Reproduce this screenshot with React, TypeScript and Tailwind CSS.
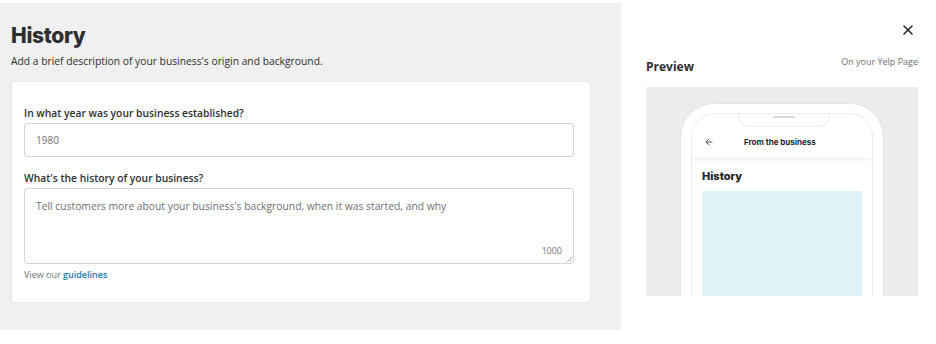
import React from 'react';
import { X, ArrowLeft } from 'lucide-react';

const sans = "font-['Open_Sans',sans-serif]";

const Phone: React.FC = () => (
  <div className="mx-auto mt-[16px] w-[204px] h-[260px] rounded-t-[34px] bg-white border border-[#e4e4e4] px-[10px] pt-[9px]">
    <div className="relative h-full rounded-t-[24px] border border-[#ececec] bg-white overflow-hidden">
      {/* notch */}
      <div className="absolute left-[46px] -top-px w-[92px] h-[14px] rounded-b-[12px] border border-t-0 border-[#ececec] bg-white flex justify-center pt-[3px]">
        <div className="w-[22px] h-[2px] rounded-full bg-[#d8d8d8]" />
      </div>
      <div className="mt-[12px] h-[32px] flex items-center px-[12px] shadow-[0_2px_3px_rgba(0,0,0,0.06)]">
        <ArrowLeft size={10} strokeWidth={2} className="text-[#333]" />
        <span className="ml-[30px] text-[8px] font-bold text-[#222] font-['Inter',sans-serif]">From the business</span>
      </div>
      <div className="px-[10px] pt-[13px]">
        <div className="text-[11px] font-extrabold text-[#222] font-['Inter',sans-serif] leading-none">History</div>
        <div className="mt-[9px] h-[120px] bg-[#dff2f7]" />
      </div>
    </div>
  </div>
);

export default function App() {
  return (
    <div className={`w-[936px] h-[344px] bg-white flex ${sans}`}>
      <div className="w-[621px] h-[327px] mt-[3px] bg-[#f0f0f0] pl-[11px] pr-[30px] pt-[19px]">
        <h1 className="text-[21px] leading-[28px] font-extrabold text-[#2d2e2f] font-['Inter',sans-serif] tracking-[-0.3px]">History</h1>
        <p className="mt-[4px] text-[10.3px] text-[#2d2e2f]">Add a brief description of your business's origin and background.</p>
        <div className="mt-[12px] h-[222px] bg-white border border-[#e8e8e8] pl-[12px] pr-[16px] pt-[24px]">
          <label className="block text-[10.3px] font-semibold text-[#2d2e2f] leading-[14px]">In what year was your business established?</label>
          <div className="mt-[3px] h-[34px] rounded-[3px] border border-[#d6d6d6] flex items-center px-[11px] text-[10px] text-[#6e7072]">1980</div>
          <label className="block mt-[14px] text-[10.3px] font-semibold text-[#2d2e2f] leading-[14px]">What's the history of your business?</label>
          <div className="relative mt-[3px] h-[76px] rounded-[3px] border border-[#d6d6d6] px-[11px] pt-[10px] text-[10.3px] text-[#6e7072]">
            Tell customers more about your business's background, when it was started, and why
            <span className="absolute right-[11px] bottom-[6px] text-[9px] text-[#6e7072]">1000</span>
            <svg className="absolute right-[1px] bottom-[1px]" width="6" height="6" viewBox="0 0 6 6">
              <path d="M1 6 L6 1 M3.5 6 L6 3.5" stroke="#999" strokeWidth="0.8" />
            </svg>
          </div>
          <p className="mt-[4px] text-[9px] text-[#6e7072]">
            View our <span className="font-semibold text-[#1b7aa0]">guidelines</span>
          </p>
        </div>
      </div>
      <div className="flex-1 pl-[25px] pr-[18px]">
        <div className="flex justify-end pt-[22px] pr-[2px]">
          <X size={16} strokeWidth={2.2} className="text-[#222]" />
        </div>
        <div className="mt-[20px] flex justify-between items-start">
          <span className="text-[12px] font-bold text-[#2d2e2f]">Preview</span>
          <span className="text-[9px] text-[#6e7072] mt-[-3px]">On your Yelp Page</span>
        </div>
        <div className="mt-[11px] h-[209px] bg-[#ececec] overflow-hidden">
          <Phone />
        </div>
      </div>
    </div>
  );
}
